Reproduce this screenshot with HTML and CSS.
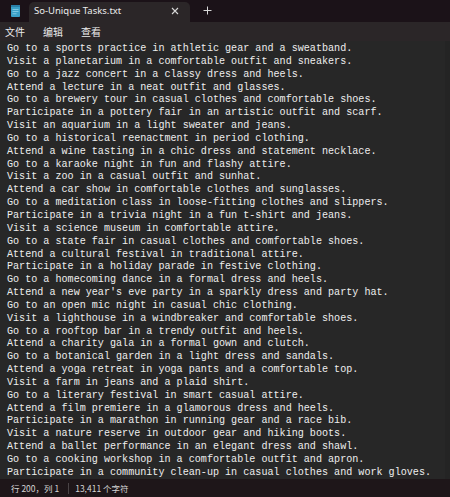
FILE: index.html
```html
<!DOCTYPE html>
<html lang="zh">
<head>
<meta charset="utf-8">
<title>So-Unique Tasks.txt</title>
<link rel="stylesheet" href="styles.css">
</head>
<body>
<div class="window">
  <div class="titlebar">
    <div class="app-icon">
      <svg width="9" height="12" viewBox="0 0 9 12"><rect x="0" y="0" width="9" height="12" rx="1" fill="#3aa0c8"/><rect x="0" y="0" width="9" height="2" fill="#2a7fa8"/><rect x="1.5" y="4" width="6" height="0.8" fill="#8fd3ec"/><rect x="1.5" y="6.2" width="6" height="0.8" fill="#8fd3ec"/><rect x="1.5" y="8.4" width="4" height="0.8" fill="#8fd3ec"/></svg>
    </div>
    <div class="tab">
      <span class="tab-title">So-Unique Tasks.txt</span>
      <svg class="tab-close" width="8" height="8" viewBox="0 0 8 8"><path d="M1 1L7 7M7 1L1 7" stroke="#d8d8d8" stroke-width="1.1"/></svg>
    </div>
    <svg class="new-tab" width="9" height="9" viewBox="0 0 9 9"><path d="M4.5 0.5V8.5M0.5 4.5H8.5" stroke="#d8d8d8" stroke-width="1"/></svg>
  </div>
  <div class="menubar">
    <span class="menu-item">文件</span>
    <span class="menu-item">编辑</span>
    <span class="menu-item">查看</span>
  </div>
  <div class="editor">
<pre class="text">Go to a sports practice in athletic gear and a sweatband.
Visit a planetarium in a comfortable outfit and sneakers.
Go to a jazz concert in a classy dress and heels.
Attend a lecture in a neat outfit and glasses.
Go to a brewery tour in casual clothes and comfortable shoes.
Participate in a pottery fair in an artistic outfit and scarf.
Visit an aquarium in a light sweater and jeans.
Go to a historical reenactment in period clothing.
Attend a wine tasting in a chic dress and statement necklace.
Go to a karaoke night in fun and flashy attire.
Visit a zoo in a casual outfit and sunhat.
Attend a car show in comfortable clothes and sunglasses.
Go to a meditation class in loose-fitting clothes and slippers.
Participate in a trivia night in a fun t-shirt and jeans.
Visit a science museum in comfortable attire.
Go to a state fair in casual clothes and comfortable shoes.
Attend a cultural festival in traditional attire.
Participate in a holiday parade in festive clothing.
Go to a homecoming dance in a formal dress and heels.
Attend a new year's eve party in a sparkly dress and party hat.
Go to an open mic night in casual chic clothing.
Visit a lighthouse in a windbreaker and comfortable shoes.
Go to a rooftop bar in a trendy outfit and heels.
Attend a charity gala in a formal gown and clutch.
Go to a botanical garden in a light dress and sandals.
Attend a yoga retreat in yoga pants and a comfortable top.
Visit a farm in jeans and a plaid shirt.
Go to a literary festival in smart casual attire.
Attend a film premiere in a glamorous dress and heels.
Participate in a marathon in running gear and a race bib.
Visit a nature reserve in outdoor gear and hiking boots.
Attend a ballet performance in an elegant dress and shawl.
Go to a cooking workshop in a comfortable outfit and apron.
Participate in a community clean-up in casual clothes and work gloves.</pre>
    <div class="scrollbar"></div>
  </div>
  <div class="statusbar">
    <span class="status-item">行 200，列 1</span>
    <span class="status-sep"></span>
    <span class="status-item">13,411 个字符</span>
  </div>
</div>
</body>
</html>
```
FILE: styles.css
```css
html, body {
  margin: 0;
  padding: 0;
  background: #272727;
}
.window {
  width: 450px;
  height: 497px;
  display: flex;
  flex-direction: column;
  overflow: hidden;
  font-family: "Noto Sans", "Noto Sans CJK SC", sans-serif;
}
.titlebar {
  height: 22px;
  flex: none;
  background: #1b1218;
  display: flex;
  align-items: flex-end;
}
.app-icon {
  width: 29px;
  height: 22px;
  display: flex;
  align-items: center;
  justify-content: center;
  padding-left: 1px;
  box-sizing: border-box;
}
.tab {
  width: 161px;
  height: 20px;
  background: #2b2628;
  border-radius: 5px 5px 0 0;
  display: flex;
  align-items: center;
  box-sizing: border-box;
  padding: 0 10px 0 5px;
  position: relative;
}
.tab-title {
  flex: 1;
  color: #ececec;
  font-size: 9.5px;
  line-height: 12px;
  padding-bottom: 2px;
}
.tab-close {
  margin-right: 1px;
  margin-bottom: 2px;
}
.new-tab {
  margin-left: 13px;
  margin-bottom: 7px;
}
.menubar {
  height: 19px;
  flex: none;
  background: #2b2628;
  display: flex;
  align-items: center;
  padding-left: 5px;
  gap: 18px;
}
.menu-item {
  color: #ececec;
  font-size: 10px;
  font-family: "Noto Sans CJK SC", sans-serif;
  line-height: 12px;
  padding-top: 1px;
}
.editor {
  flex: 1;
  background: #272727;
  position: relative;
  overflow: hidden;
}
.text {
  margin: 0;
  padding: 2px 0 0 7px;
  font-family: "Liberation Mono", "DejaVu Sans Mono", monospace;
  font-size: 10.1px;
  line-height: 12.85px;
  color: #eeeeee;
  white-space: pre;
}
.scrollbar {
  position: absolute;
  right: 0;
  top: 0;
  bottom: 0;
  width: 5px;
  background: #242424;
}
.statusbar {
  height: 18px;
  flex: none;
  background: #1e1619;
  display: flex;
  align-items: center;
  padding-left: 11px;
  font-family: "Noto Sans CJK SC", sans-serif;
  font-size: 8.5px;
  color: #d4d4d4;
}
.status-sep {
  width: 1px;
  height: 11px;
  background: #4a4446;
  margin: 0 6px 0 9px;
}
```
